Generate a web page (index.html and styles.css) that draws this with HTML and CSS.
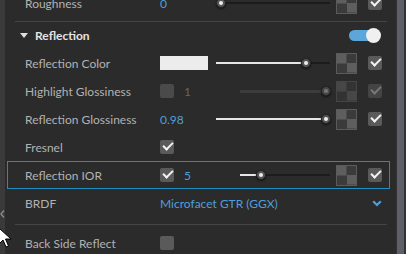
FILE: index.html
```html
<!DOCTYPE html>
<html lang="en">
<head>
  <meta charset="UTF-8" />
  <title>Material Properties</title>
  <link rel="stylesheet" href="styles.css">
</head>
<body>
  <div class="app">
    <div class="edge">
      <svg class="edge-arrow" width="5" height="8" viewBox="0 0 5 8"><path d="M4 0.5 L1 4 L4 7.5" fill="none" stroke="#8a8a8a" stroke-width="1.4"/></svg>
    </div>

    <div class="panel">
      <div class="row row-first">
        <span class="label">Roughness</span>
        <span class="ctrl"><span class="num">0</span></span>
        <div class="slider"><div class="fill" style="width:5px"><span class="knob"></span></div></div>
        <span class="checker"></span>
        <span class="check on"></span>
      </div>

      <div class="sep"></div>

      <div class="head">
        <span class="tri"></span>
        <span class="head-title">Reflection</span>
        <span class="toggle"><span class="toggle-knob"></span></span>
      </div>

      <div class="row">
        <span class="label">Reflection Color</span>
        <span class="ctrl"><span class="swatch"></span></span>
        <div class="slider"><div class="fill" style="width:90px"><span class="knob"></span></div></div>
        <span class="checker"></span>
        <span class="check on"></span>
      </div>

      <div class="row disabled">
        <span class="label">Highlight Glossiness</span>
        <span class="ctrl ctrl-wide"><span class="check"></span><span class="num">1</span></span>
        <div class="slider"><div class="fill" style="width:86px"><span class="knob"></span></div></div>
        <span class="checker"></span>
        <span class="check on"></span>
      </div>

      <div class="row">
        <span class="label">Reflection Glossiness</span>
        <span class="ctrl"><span class="num">0.98</span></span>
        <div class="slider"><div class="fill" style="width:110px"><span class="knob"></span></div></div>
        <span class="checker"></span>
        <span class="check on"></span>
      </div>

      <div class="row">
        <span class="label">Fresnel</span>
        <span class="ctrl"><span class="check on"></span></span>
      </div>

      <div class="row selected">
        <span class="label">Reflection IOR</span>
        <span class="ctrl ctrl-wide"><span class="check on"></span><span class="num">5</span></span>
        <div class="slider"><div class="fill" style="width:21px"><span class="knob"></span></div></div>
        <span class="checker"></span>
        <span class="check on"></span>
      </div>

      <div class="row">
        <span class="label">BRDF</span>
        <span class="select">Microfacet GTR (GGX)</span>
        <svg class="chevron" width="10" height="7" viewBox="0 0 10 7"><path d="M1.2 1.2 L5 5 L8.8 1.2" fill="none" stroke="#4f9fdb" stroke-width="2.2"/></svg>
      </div>

      <div class="sep sep-low"></div>

      <div class="row">
        <span class="label">Back Side Reflect</span>
        <span class="ctrl"><span class="check"></span></span>
      </div>
    </div>

    <div class="scroll"><div class="thumb"></div></div>

    <svg class="cursor" width="14" height="22" viewBox="0 0 14 22">
      <path d="M1 1 L1 17 L5 13 L8 20 L10.5 19 L7.5 12 L13 12 Z" fill="#fff" stroke="#000" stroke-width="1"/>
    </svg>
  </div>
</body>
</html>
```

FILE: styles.css
```css
* {
  box-sizing: border-box;
}
body {
  margin: 0;
  background: #2b2b2b;
  font-family: Lato, "Open Sans", sans-serif;
  font-size: 12px;
  color: #b2b2b2;
  overflow: hidden;
}
.app {
  position: relative;
  display: flex;
  width: 406px;
  height: 254px;
  overflow: hidden;
}
.edge {
  width: 5px;
  background: #3a3a3a;
  position: relative;
}
.edge-arrow {
  position: absolute;
  left: 0;
  top: 210px;
}
.panel {
  width: 391px;
}
.scroll {
  width: 10px;
  background: #333;
}
.thumb {
  margin-left: 1px;
  width: 7px;
  height: 100%;
  background: #5d6068;
}

.row {
  display: flex;
  align-items: center;
  height: 28px;
  margin: 0 6px 0 2px;
  padding: 0 7px 0 17px;
  border: 1px solid transparent;
}
.row-first {
  margin-top: -11px;
}
.row.selected {
  border-color: #1e8dc0;
}
.label {
  width: 135px;
  white-space: nowrap;
}
.ctrl {
  display: flex;
  align-items: center;
  width: 56px;
}
.ctrl-wide {
  width: 80px;
}
.num {
  color: #4f9fdb;
}
.ctrl-wide .num {
  margin-left: 10px;
}
.swatch {
  width: 48px;
  height: 14px;
  background: #ececec;
}

.slider {
  flex: 1;
  height: 2px;
  background: #1c1c1c;
}
.fill {
  position: relative;
  height: 2px;
  background: #e6e6e6;
}
.knob {
  position: absolute;
  right: -5px;
  top: -4px;
  width: 10px;
  height: 10px;
  border-radius: 50%;
  background: #555;
  border: 1px solid #222;
  box-shadow: 0 1px 2px rgba(0, 0, 0, 0.6);
}
.knob::after {
  content: "";
  position: absolute;
  left: 2px;
  top: 2px;
  width: 4px;
  height: 4px;
  border-radius: 50%;
  background: #eee;
}

.checker {
  width: 21px;
  height: 21px;
  margin-left: 6px;
  border: 1px solid #5b5b5b;
  background:
    linear-gradient(#5e5e5e, #5e5e5e) 0 0 / 50% 50% no-repeat,
    linear-gradient(#5e5e5e, #5e5e5e) 100% 100% / 50% 50% no-repeat,
    #3b3b3b;
}
.check {
  position: relative;
  width: 14px;
  height: 14px;
  margin-left: 11px;
  border-radius: 2px;
  background: #5a5a5a;
}
.ctrl .check {
  margin-left: 0;
}
.check.on::after {
  content: "";
  position: absolute;
  left: 3px;
  top: 2px;
  width: 8px;
  height: 4px;
  border-left: 2px solid #f2f2f2;
  border-bottom: 2px solid #f2f2f2;
  transform: rotate(-45deg);
}

.disabled .num {
  color: #666;
}
.disabled .ctrl .check {
  background: #4a4a4a;
}
.disabled .slider {
  background: #3a3a3a;
}
.disabled .fill {
  height: 3px;
  margin-top: -0.5px;
  background: #3c3c3c;
}
.disabled .knob {
  top: -3.5px;
  background: #474747;
}
.disabled .knob::after {
  background: #777;
}
.disabled .checker {
  opacity: 0.55;
}
.disabled .check.on {
  background: #444;
}
.disabled .check.on::after {
  border-color: #777;
}

.sep {
  height: 1px;
  margin: 4px 9px 0 10px;
  background: #444;
}
.sep-low {
  margin-top: 7px;
  margin-bottom: 4px;
}
.head {
  display: flex;
  align-items: center;
  height: 27px;
  padding: 0 19px 0 15px;
}
.tri {
  width: 0;
  height: 0;
  border-left: 4px solid transparent;
  border-right: 4px solid transparent;
  border-top: 5px solid #e0e0e0;
}
.head-title {
  margin-left: 7px;
  font-size: 12px;
  font-weight: 700;
  color: #e4e4e4;
  flex: 1;
}
.toggle {
  position: relative;
  width: 28px;
  height: 11px;
  border-radius: 6px;
  background: #5da6da;
}
.toggle-knob {
  position: absolute;
  right: -4px;
  top: -2px;
  width: 15px;
  height: 15px;
  border-radius: 50%;
  background: #f0f0f0;
}

.select {
  flex: 1;
  color: #4f9fdb;
}

.cursor {
  position: absolute;
  left: -2px;
  top: 227px;
}
```
